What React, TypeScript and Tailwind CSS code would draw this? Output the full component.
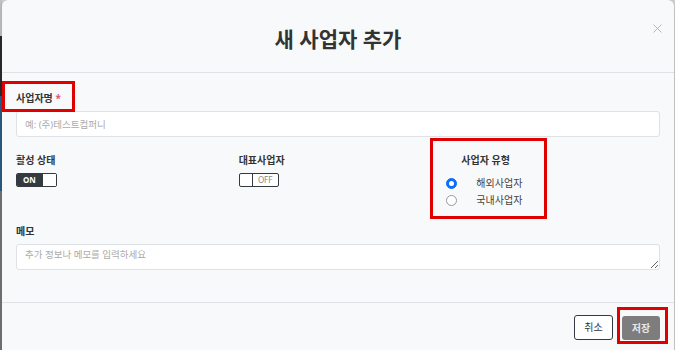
import { X } from "lucide-react";

function Toggle({ on }: { on: boolean }) {
  if (on) {
    return (
      <div className="w-[41px] h-[14px] flex rounded-[2px] overflow-hidden border border-[#343a40]">
        <div className="flex-1 bg-[#343a40] text-white text-[8px] font-bold leading-[12px] pl-[6px]">ON</div>
        <div className="w-[13px] bg-white"></div>
      </div>
    );
  }
  return (
    <div className="w-[40px] h-[14px] flex rounded-[2px] overflow-hidden border border-[#343a40] bg-white">
      <div className="w-[13px] border-r border-[#343a40]"></div>
      <div className="flex-1 text-[#888] text-[8px] leading-[12px] text-center">OFF</div>
    </div>
  );
}

function Radio({ checked, label }: { checked: boolean; label: string }) {
  return (
    <div className="flex items-center h-[17px] -ml-[15px]">
      {checked ? (
        <span className="w-[11px] h-[11px] rounded-full bg-[#0d6efd] border border-[#0d6efd] flex items-center justify-center">
          <span className="w-[5px] h-[5px] rounded-full bg-white"></span>
        </span>
      ) : (
        <span className="w-[11px] h-[11px] rounded-full bg-white border border-[#999]"></span>
      )}
      <span className="ml-[19px] text-[10px] text-[#444]">{label}</span>
    </div>
  );
}

export default function App() {
  return (
    <div className="w-[675px] h-[350px] overflow-hidden bg-[#d9d9d9] flex flex-col font-['Noto_Sans','Noto_Sans_CJK_KR',sans-serif]">
      {/* page behind the dialog, mostly hidden */}
      <div className="h-[4px] overflow-hidden flex bg-[#d6d6d6]">
        <div className="w-[433px] bg-[#cfcfcf]"></div>
        <div className="w-[44px] bg-[#c0392b]"></div>
        <div className="w-[40px] bg-[#d98b36]"></div>
        <div className="w-[40px] bg-[#4e9f3d]"></div>
        <div className="w-[45px] bg-[#2f8a34] border-l border-[#d6d6d6]"></div>
        <div className="flex-1 bg-[#b8b8b8]"></div>
      </div>

      <div className="flex flex-1">
        <div className="w-[2px] flex flex-col">
          <div className="h-[36px] bg-[#c9c9c9]"></div>
          <div className="h-[60px] bg-[#2c2c2c]"></div>
          <div className="h-[95px] bg-[#2d5f8c]"></div>
          <div className="flex-1 bg-[#7a7a7a]"></div>
        </div>

        <div className="w-[672px] h-[360px] bg-[#f8f9fa] rounded-t-[6px] shadow-[0_0_6px_rgba(0,0,0,0.25)] text-[#333]">
          <div className="relative h-[73px] border-b border-[#dee2e6] flex items-center justify-center pt-[7px]">
            <h2 className="text-[21px] font-bold text-[#333]">새 사업자 추가</h2>
            <button className="absolute right-[9px] top-[21px] text-[#aaa]">
              <X size={15} strokeWidth={1.3} />
            </button>
          </div>

          <div className="px-[14px] pt-[17px] pb-[32px]">
            <div className="relative w-fit">
              <span className="absolute left-[-14px] top-[-9px] w-[73px] h-[31px] border-[3px] border-[#e00000] pointer-events-none"></span>
              <label className="block text-[10px] font-bold leading-[16px] text-[#333]">
                사업자명 <span className="text-[#e0527a]">*</span>
              </label>
            </div>
            <input
              placeholder="예: (주)테스트컴퍼니"
              className="mt-[5px] block w-full h-[26px] bg-white border border-[#dee2e6] rounded-[3px] px-[8px] text-[9.5px] placeholder:text-[#aaa] outline-none"
            />

            <div className="mt-[15px] grid grid-cols-3 gap-x-6">
              <div>
                <div className="text-[10px] font-bold leading-[16px]">활성 상태</div>
                <div className="mt-[5px]">
                  <Toggle on />
                </div>
              </div>
              <div>
                <div className="text-[10px] font-bold leading-[16px]">대표사업자</div>
                <div className="mt-[5px]">
                  <Toggle on={false} />
                </div>
              </div>
              <div className="relative">
                <span className="absolute left-[-31px] top-[-14px] w-[117px] h-[81px] border-[3px] border-[#e00000] pointer-events-none"></span>
                <div className="text-[10px] font-bold leading-[16px]">사업자 유형</div>
                <div className="mt-[7px]">
                  <Radio checked label="해외사업자" />
                  <Radio checked={false} label="국내사업자" />
                </div>
              </div>
            </div>

            <div className="mt-[14px] text-[10px] font-bold leading-[16px]">메모</div>
            <textarea
              placeholder="추가 정보나 메모를 입력하세요"
              className="mt-[5px] block w-full h-[26px] bg-white border border-[#dee2e6] rounded-[3px] px-[8px] py-[3px] text-[9.5px] leading-[14px] placeholder:text-[#aaa] outline-none"
            />
          </div>

          <div className="border-t border-[#dee2e6] flex justify-end items-start gap-[9px] pt-[12px] pr-[14px]">
            <button className="w-[39px] h-[25px] bg-white border border-[#343a40] rounded-[3px] text-[10px] text-[#333]">
              취소
            </button>
            <div className="relative mt-[1px]">
              <span className="absolute left-[-5px] top-[-9px] w-[51px] h-[37px] border-[3px] border-[#e00000] pointer-events-none"></span>
              <button className="block w-[38px] h-[24px] bg-[#7d7d7d] rounded-[3px] text-[10px] font-bold text-[#e8e8e8]">
                저장
              </button>
            </div>
          </div>
        </div>
      </div>
    </div>
  );
}
